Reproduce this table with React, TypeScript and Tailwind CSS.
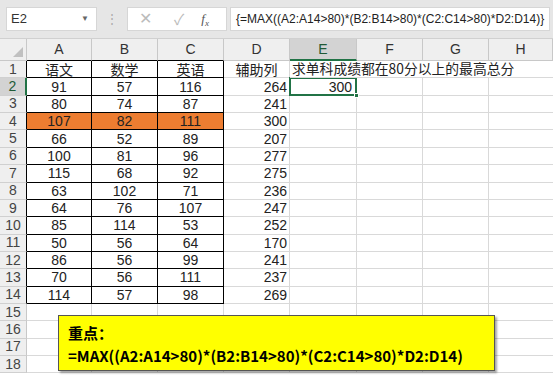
import React from "react";

const data: (string | number)[][] = [
  ["语文", "数学", "英语", "辅助列", "求单科成绩都在80分以上的最高总分"],
  [91, 57, 116, 264, 300],
  [80, 74, 87, 241, ""],
  [107, 82, 111, 300, ""],
  [66, 52, 89, 207, ""],
  [100, 81, 96, 277, ""],
  [115, 68, 92, 275, ""],
  [63, 102, 71, 236, ""],
  [64, 76, 107, 247, ""],
  [85, 114, 53, 252, ""],
  [50, 56, 64, 170, ""],
  [86, 56, 99, 241, ""],
  [70, 56, 111, 237, ""],
  [114, 57, 98, 269, ""],
  ["", "", "", "", ""],
  ["", "", "", "", ""],
  ["", "", "", "", ""],
  ["", "", "", "", ""],
];

const cols = ["A", "B", "C", "D", "E", "F", "G", "H"];
const font = { fontFamily: '"Liberation Sans", "Noto Sans CJK SC", sans-serif' };
const cjk = { fontFamily: '"Noto Sans CJK SC", sans-serif' };

export default function App() {
  return (
    <div className="w-[553px] h-[376px] overflow-hidden bg-white relative text-[#222]" style={font}>
      {/* formula bar */}
      <div className="h-[39px] bg-[#e6e6e6] flex items-center border-b border-[#d0d0d0]">
        <div className="ml-[6px] w-[91px] h-[24px] bg-white border border-[#d6d6d6] flex items-center justify-between px-[4px]">
          <span className="text-[13px] text-[#333]">E2</span>
          <span className="text-[8px] text-[#666] mr-[3px]">▼</span>
        </div>
        <div className="w-[30px] flex justify-center text-[#aaa] text-[12px]">⋮</div>
        <div className="w-[100px] h-[24px] bg-white border border-[#d6d6d6] flex items-center text-[#bbb]">
          <span className="ml-[11px] text-[16px] leading-none">✕</span>
          <span className="ml-[22px] text-[15px] leading-none">✓</span>
          <span className="ml-[17px] text-[13px] italic text-[#555]" style={{ fontFamily: '"Liberation Serif", serif' }}>f<sub className="text-[9px]">x</sub></span>
        </div>
        <div className="ml-[3px] w-[320px] h-[24px] bg-white border border-[#d6d6d6] flex items-center pl-[5px] text-[12px] text-[#222] whitespace-nowrap overflow-hidden">
          {"{=MAX((A2:A14>80)*(B2:B14>80)*(C2:C14>80)*D2:D14)}"}
        </div>
      </div>

      {/* grid */}
      <div className="grid grid-cols-[27px_65px_66px_66px_66px_67px_66px_66px_1fr]">
        {/* header row */}
        <div className="h-[22px] bg-[#efefef] border-r border-b border-[#c8c8c8] relative">
          <div className="absolute right-[3px] bottom-[3px] w-0 h-0 border-l-[10px] border-l-transparent border-b-[10px] border-b-[#c0c0c0]" />
        </div>
        {cols.map((c) =>
          c === "E" ? (
            <div key={c} className="h-[22px] bg-[#d3d3d3] border-r border-[#c8c8c8] border-b-2 border-b-[#217346] flex items-center justify-center text-[14px] text-[#215a36]">
              {c}
            </div>
          ) : (
            <div key={c} className={`h-[22px] bg-[#efefef] border-r border-[#c8c8c8] border-b flex items-center justify-center text-[14px] text-[#333] ${c === "A" || c === "B" || c === "C" ? "border-b-black" : "border-b-[#c8c8c8]"}`}>
              {c}
            </div>
          )
        )}
        {data.map((row, ri) => {
          const r = ri + 1;
          const inTable = r <= 14;
          const orange = r === 4;
          return (
            <React.Fragment key={r}>
              <div className={`h-[17.36px] border-b border-r flex items-center justify-center text-[14px] ${r === 2 ? "bg-[#d3d3d3] border-r-2 border-r-[#217346] text-[#215a36]" : "bg-[#efefef] text-[#444]"} ${r !== 2 && inTable ? "border-r-black" : ""} ${r !== 2 && !inTable ? "border-r-[#c8c8c8]" : ""} border-b-[#d0d0d0]`}>
                {r}
              </div>
              {[0, 1, 2].map((ci) => (
                <div key={ci} className={`h-[17.36px] flex items-center justify-center leading-none ${inTable ? "border-r border-b border-black" : "border-r border-b border-[#d9d9d9]"} ${orange ? "bg-[#ed7d31]" : ""} ${r === 1 ? "text-[14px]" : "text-[14px]"}`} style={r === 1 ? cjk : undefined}>
                  {row[ci]}
                </div>
              ))}
              <div className={`h-[17.36px] border-r border-b border-[#d9d9d9] flex items-center text-[14px] leading-none ${r === 1 ? "justify-center" : "justify-end pr-[2px]"}`} style={r === 1 ? cjk : undefined}>
                {row[3]}
              </div>
              {r === 2 ? (
                <div className="h-[17.36px] border-r border-b border-[#d9d9d9] relative flex items-center justify-end pr-[4px] text-[14px] leading-none">
                  <div className="absolute left-[-1px] top-[-1px] right-[-1px] bottom-[-1px] border-2 border-[#217346]" />
                  <div className="absolute right-[-3px] bottom-[-3px] w-[5px] h-[5px] bg-[#217346] border border-white" />
                  {row[4]}
                </div>
              ) : r === 1 ? (
                <div className="h-[17.36px] border-b border-[#d9d9d9] flex items-center pl-[2px] text-[13.8px] leading-none whitespace-nowrap overflow-visible z-10" style={cjk}>
                  {row[4]}
                </div>
              ) : (
                <div className="h-[17.36px] border-r border-b border-[#d9d9d9]" />
              )}
              <div className={`h-[17.36px] border-b border-[#d9d9d9] ${r === 1 ? "" : "border-r"}`} />
              <div className={`h-[17.36px] border-b border-[#d9d9d9] ${r === 1 ? "" : "border-r"}`} />
              <div className="h-[17.36px] border-b border-[#d9d9d9]" />
            </React.Fragment>
          );
        })}
      </div>

      {/* callout */}
      <div className="absolute left-[58px] top-[315px] w-[437px] h-[56px] bg-[#ffff00] border border-[#555] shadow-[2px_2px_2px_rgba(0,0,0,0.35)] pl-[9px] pt-[5px] font-bold text-[15px] leading-[23px] text-black" style={cjk}>
        <div>重点：</div>
        <div className="whitespace-nowrap">=MAX((A2:A14&gt;80)*(B2:B14&gt;80)*(C2:C14&gt;80)*D2:D14)</div>
      </div>
    </div>
  );
}
